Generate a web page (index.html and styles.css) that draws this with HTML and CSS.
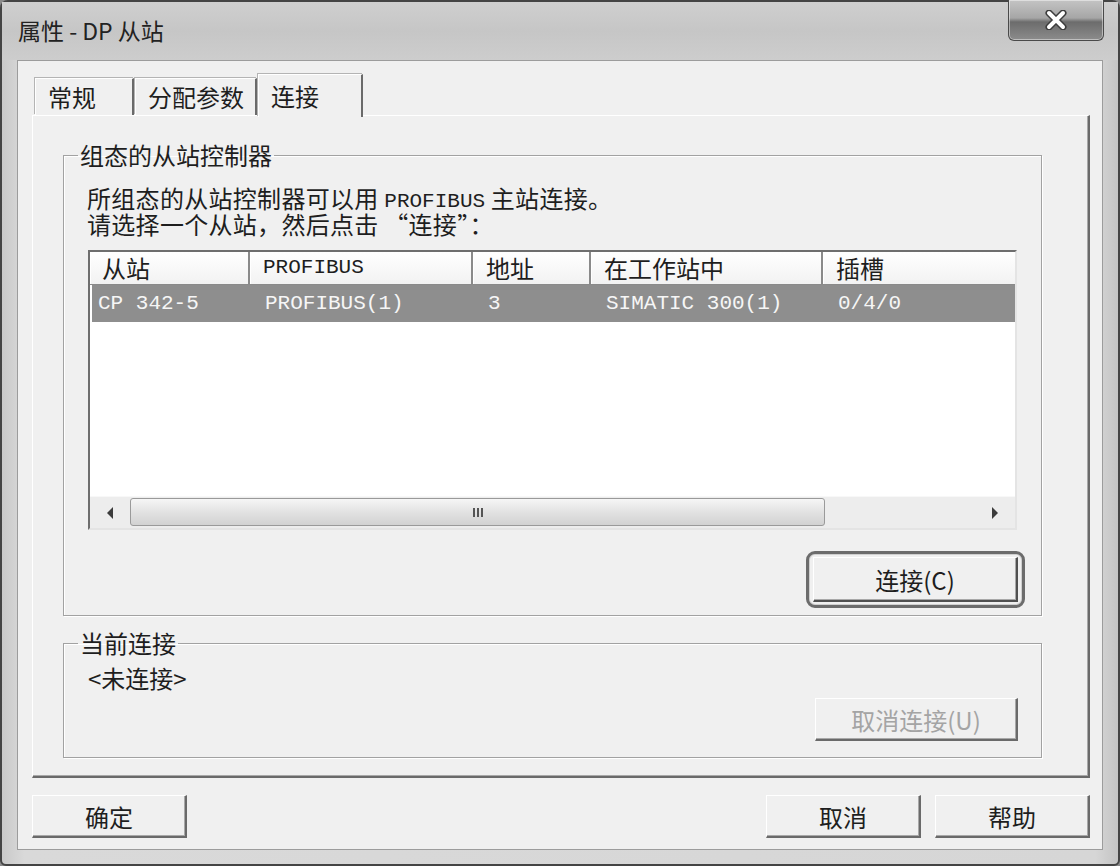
FILE: index.html
```html
<!DOCTYPE html>
<html lang="zh-CN">
<head>
  <meta charset="UTF-8">
  <title>属性 - DP 从站</title>
  <link rel="stylesheet" href="styles.css">
</head>
<body>

<div class="window">
  <!-- Barre de titre -->
  <div class="titlebar">
    <span class="title">属性 - DP 从站</span>
    <button class="close-btn" aria-label="关闭">
      <svg width="24" height="20" viewBox="0 0 24 20">
        <path d="M5 3 L19 17 M19 3 L5 17" stroke="#3c3c3c" stroke-width="7" stroke-linecap="round"/>
        <path d="M5 3 L19 17 M19 3 L5 17" stroke="#ffffff" stroke-width="4" stroke-linecap="round"/>
      </svg>
    </button>
  </div>

  <div class="client">
    <!-- Onglets -->
    <div class="tabs">
      <div class="tab tab-general">常规</div>
      <div class="tab tab-params">分配参数</div>
      <div class="tab tab-connect active">连接</div>
    </div>

    <div class="tab-panel">
      <fieldset class="group group-slaves">
        <legend>组态的从站控制器</legend>
        <div class="hint">
          <div class="hint-line">所组态的从站控制器可以用 <span class="mono">PROFIBUS</span> 主站连接。</div>
          <div class="hint-line">请选择一个从站，然后点击 “连接”：</div>
        </div>

        <div class="listview">
          <div class="list-head">
            <div class="col c1">从站</div>
            <div class="col c2 mono">PROFIBUS</div>
            <div class="col c3">地址</div>
            <div class="col c4">在工作站中</div>
            <div class="col c5">插槽</div>
          </div>
          <div class="list-row selected mono">
            <div class="col c1">CP 342-5</div>
            <div class="col c2">PROFIBUS(1)</div>
            <div class="col c3">3</div>
            <div class="col c4">SIMATIC 300(1)</div>
            <div class="col c5">0/4/0</div>
          </div>
          <div class="list-body"></div>
          <div class="hscroll">
            <div class="sb-btn"><span class="arrow-left"></span></div>
            <div class="sb-track">
              <div class="sb-thumb"><span class="grip"></span><span class="grip"></span><span class="grip"></span></div>
            </div>
            <div class="sb-btn"><span class="arrow-right"></span></div>
          </div>
        </div>

        <div class="btn-row">
          <div class="focus-ring">
            <button class="btn btn-connect">连接(C)</button>
          </div>
        </div>
      </fieldset>

      <fieldset class="group group-current">
        <legend>当前连接</legend>
        <div class="status">&lt;未连接&gt;</div>
        <div class="btn-row">
          <button class="btn btn-disconnect" disabled>取消连接(U)</button>
        </div>
      </fieldset>
    </div>

    <!-- Boutons du dialogue -->
    <div class="dialog-buttons">
      <button class="btn btn-dlg">确定</button>
      <span class="spacer"></span>
      <button class="btn btn-dlg">取消</button>
      <button class="btn btn-dlg">帮助</button>
    </div>
  </div>
</div>

</body>
</html>
```

FILE: styles.css
```css
/* Style global */
* {
  box-sizing: border-box;
}

body {
  margin: 0;
  width: 1120px;
  height: 866px;
  overflow: hidden;
  background-color: #8a8a8a;
  font-family: "Noto Sans CJK SC", "Noto Sans", sans-serif;
  color: #1e1e1e;
}

.mono {
  font-family: "Liberation Mono", "Noto Sans CJK SC", monospace;
  font-size: 21px;
}

/* Fenetre */
.window {
  width: 1120px;
  height: 866px;
  display: flex;
  flex-direction: column;
  background: linear-gradient(to right, #c9c9c9, #d9d9d9 2%, #d6d6d6 98%, #c4c4c4);
  border: 2px solid #444;
  border-radius: 8px 8px 6px 6px;
  padding: 0 15px 14px 15px;
}

.titlebar {
  height: 58px;
  display: flex;
  align-items: flex-start;
  justify-content: space-between;
  background: linear-gradient(to bottom, #cfcfcf, #c6c6c6 50%, #cdcdcd);
  margin: 0 -15px;
  padding: 0 14px 0 16px;
}

.title {
  font-size: 23px;
  line-height: 30px;
  padding-top: 13px;
  color: #222;
}

.close-btn {
  margin-top: -2px;
  width: 96px;
  height: 41px;
  border: 1px solid #4a4a4a;
  border-top: none;
  border-radius: 0 0 6px 6px;
  background: linear-gradient(to bottom, #c4c4c4, #a6a6a6 45%, #6c6c6c 55%, #8c8c8c);
  display: flex;
  align-items: center;
  justify-content: center;
  padding: 0;
  box-shadow: inset 0 0 0 1px rgba(255, 255, 255, 0.45);
}

/* Zone client */
.client {
  flex: 1;
  background-color: #f0f0f0;
  border: 1px solid #9c9c9c;
  padding: 13px 12px 11px 14px;
  display: flex;
  flex-direction: column;
}

.tabs {
  display: flex;
  align-items: flex-end;
  height: 41px;
  padding-left: 3px;
  gap: 1px;
}

.tab {
  height: 37px;
  padding-left: 12px;
  font-size: 24px;
  line-height: 35px;
  background-color: #f0f0f0;
  border-top: 1px solid #ffffff;
  border-left: 1px solid #ffffff;
  border-right: 2px solid #6a6a6a;
  box-shadow: -1px -1px 0 #b4b4b4;
}

.tab-general {
  width: 99px;
}

.tab-params {
  width: 122px;
}

.tab-connect {
  width: 105px;
}

.tab.active {
  height: 43px;
  line-height: 41px;
  margin-bottom: -2px;
  position: relative;
  z-index: 1;
}

.tab-panel {
  height: 663px;
  border-style: solid;
  border-width: 1px 2px 2px 1px;
  border-color: #ffffff #6a6a6a #6a6a6a #ffffff;
  box-shadow: inset -1px -1px 0 #a8a8a8;
  padding: 0 46px 0 30px;
}

/* Cadres de groupe */
.group {
  width: 979px;
  margin: 0;
  border: 1px solid #a2a2a2;
  box-shadow: 1px 1px 0 #ffffff, inset 1px 1px 0 #ffffff;
  padding: 0 16px 7px 14px;
}

.group legend {
  font-size: 24px;
  line-height: 26px;
  padding: 0 2px;
}

.group-slaves {
  margin-top: 26px;
}

.group-current {
  margin-top: 14px;
  padding-bottom: 16px;
}

.hint {
  margin: 17px 0 0 9px;
  font-size: 24px;
  letter-spacing: 0.3px;
}

.hint-line {
  height: 26px;
  line-height: 26px;
  white-space: nowrap;
}

.hint .mono {
  letter-spacing: 0;
  line-height: 1;
  vertical-align: 1px;
}

/* Liste */
.listview {
  margin: 13px 0 0 10px;
  width: 929px;
  height: 280px;
  display: flex;
  flex-direction: column;
  background-color: #ffffff;
  border-style: solid;
  border-width: 2px;
  border-color: #6e6e6e #e4e4e4 #e4e4e4 #6e6e6e;
}

.list-head,
.list-row {
  display: grid;
  grid-template-columns: 160px 223px 118px 232px 1fr;
}

.list-head {
  height: 33px;
  background: linear-gradient(to bottom, #ffffff, #f2f2f2);
  border-bottom: 1px solid #8a8a8a;
}

.list-head .col {
  font-size: 24px;
  line-height: 31px;
  padding-left: 13px;
  border-right: 2px solid #8a8a8a;
  box-shadow: inset 1px 0 0 #ffffff;
}

.list-head .mono {
  font-size: 21px;
}

.list-head .c1 {
  padding-left: 12px;
}

.list-head .c5 {
  border-right: none;
}

.list-row {
  height: 37px;
  margin: 0 0 0 2px;
  line-height: 37px;
}

.list-row .col {
  padding-left: 13px;
  white-space: nowrap;
}

.list-row .c1 {
  padding-left: 6px;
}

.list-row.selected {
  background-color: #8e8e8e;
  color: #f6f6f6;
}

.list-body {
  flex: 1;
}

.hscroll {
  height: 32px;
  display: flex;
  background-color: #ededed;
  border-top: 1px solid #f8f8f8;
}

.sb-btn {
  width: 40px;
  display: flex;
  align-items: center;
  justify-content: center;
}

.arrow-left {
  border-top: 6px solid transparent;
  border-bottom: 6px solid transparent;
  border-right: 6px solid #3c3c3c;
}

.arrow-right {
  border-top: 6px solid transparent;
  border-bottom: 6px solid transparent;
  border-left: 6px solid #3c3c3c;
}

.sb-track {
  flex: 1;
  padding: 1px 150px 2px 0;
}

.sb-thumb {
  height: 100%;
  border: 1px solid #9a9a9a;
  border-radius: 3px;
  background: linear-gradient(to bottom, #f6f6f6, #e2e2e2 50%, #d2d2d2);
  display: flex;
  align-items: center;
  justify-content: center;
  gap: 2px;
}

.grip {
  width: 2px;
  height: 9px;
  background-color: #555;
}

/* Boutons */
.btn {
  font-family: "Noto Sans CJK SC", "Noto Sans", sans-serif;
  font-size: 24px;
  color: #1e1e1e;
  background-color: #f0f0f0;
  border-style: solid;
  border-width: 1px 2px 2px 1px;
  border-color: #ffffff #6a6a6a #6a6a6a #ffffff;
  box-shadow: inset -1px -1px 0 #a8a8a8;
  padding: 0;
}

.btn-row {
  display: flex;
  justify-content: flex-end;
  margin-top: 21px;
}

.focus-ring {
  border: 3px solid #6c6c6c;
  border-radius: 9px;
  padding: 3px 4px;
  box-shadow: inset 0 0 0 1px #cfcfcf;
}

.btn-connect {
  display: block;
  width: 205px;
  height: 45px;
  border-color: #ffffff #505050 #505050 #ffffff;
}

.status {
  margin: 9px 0 0 10px;
  font-size: 24px;
  line-height: 26px;
}

.group-current .btn-row {
  margin-top: 7px;
  padding-right: 7px;
}

.btn-disconnect {
  width: 203px;
  height: 43px;
  color: #a4a4a4;
}

.dialog-buttons {
  display: flex;
  margin-top: 17px;
  gap: 14px;
}

.spacer {
  flex: 1;
}

.btn-dlg {
  width: 155px;
  height: 43px;
}
```
